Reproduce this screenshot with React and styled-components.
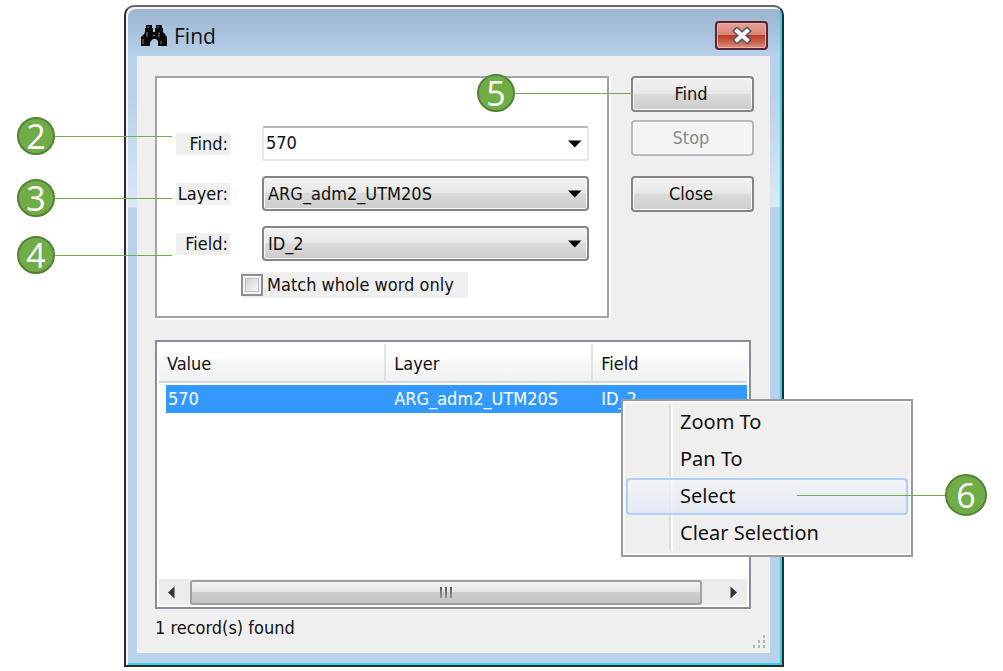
import React from "react";
import styled, { createGlobalStyle, css } from "styled-components";

const GlobalStyle = createGlobalStyle`
  *, *::before, *::after { box-sizing: border-box; }
  body {
    margin: 0;
    background: #fff;
    color: #111;
    font: 18px/22px "DejaVu Sans Condensed", "DejaVu Sans", sans-serif;
  }
  button, input, select { font: inherit; color: inherit; }
`;

const Page = styled.main`
  padding: 5px 219px 5px 124px;
`;

const Dialog = styled.section`
  position: relative;
  padding: 0 12px 12px 11px;
  border: 2px solid #2b2b2b;
  border-top-color: #6b6663;
  border-radius: 10px 10px 0 0;
  box-shadow: inset 2px 2px 0 #eef4fa, inset -2px -2px 0 #35cfe6;
  background:
    linear-gradient(to bottom, #dbe8f500 90px, #dbe8f5 200px, #dbe8f500 201px),
    linear-gradient(to bottom, #9ab4d1, #b9d1ea 50px);
`;

const TitleBar = styled.header`
  display: flex;
  align-items: center;
  gap: 6px;
  height: 49px;
  padding: 8px 2px 0 4px;

  h1 {
    flex: 1;
    margin: 0;
    font: 21px/28px "Open Sans", sans-serif;
  }
`;

const CloseBox = styled.button`
  display: grid;
  place-items: center;
  width: 53px;
  height: 29px;
  padding: 0;
  border: 2px solid #5a2530;
  border-radius: 4px;
  box-shadow: inset 0 0 0 1px #f0b3a8;
  background: linear-gradient(#e5a094, #d98476 48%, #b93a20 50%, #cf6a55 80%, #e09080);
`;

const Body = styled.div`
  padding: 20px 16px 4px 18px;
  background: #efefef;
`;

const FormArea = styled.form`
  display: grid;
  grid-template-columns: 1fr 123px;
  gap: 22px;
`;

const Group = styled.div`
  display: flex;
  flex-direction: column;
  gap: 15px;
  height: 242px;
  padding: 48px 18px 0 19px;
  border: 2px solid #a0a3ae;
  box-shadow: 2px 2px 0 #fff;
  background: #fff;
`;

const Field = styled.div`
  display: grid;
  grid-template-columns: 54px 1fr;
  align-items: center;
  gap: 32px;

  label {
    padding-right: 2px;
    background: #efefef;
    text-align: right;
  }
`;

const raised = css`
  border: 2px solid #858585;
  border-radius: 4px;
  box-shadow: inset 0 0 0 1px #fafafa;
  background: linear-gradient(#f2f2f2, #e8e8e8 48%, #dadada 50%, #cdcdcd);
`;

const Picker = styled.div`
  display: grid;
  grid-template-columns: 1fr 21px;
  align-items: center;
  height: 35px;

  select, input {
    grid-area: 1 / 1 / 2 / 3;
    width: 100%;
    height: 35px;
    margin: 0;
    padding: 0 24px 0 4px;
    appearance: none;
    outline: none;
  }
  select { ${raised} }
  input {
    padding: 0 24px 3px 2px;
    border: 2px solid #e3e9ef;
    border-top-color: #b4b7c0;
    border-radius: 2px;
    background: #fff;
  }
  svg { grid-area: 1 / 2; z-index: 1; pointer-events: none; }
`;

const CheckLabel = styled.label`
  display: flex;
  align-items: center;
  gap: 4px;
  width: 227px;
  height: 26px;
  margin: -4px 0 0 65px;
  background: #efefef;

  input {
    appearance: none;
    width: 22px;
    height: 22px;
    margin: 0;
    border: 2px solid #8e8f8f;
    box-shadow: inset 0 0 0 2px #f4f4f4, inset 0 0 0 3px #b8bdc5;
    background: linear-gradient(135deg, #c5cad2, #f6f6f6 80%);
  }
`;

const Actions = styled.div`
  display: flex;
  flex-direction: column;
  gap: 8px;
`;

const PushButton = styled.button`
  height: 36px;
  padding: 0 3px 0 0;
  ${raised}
  &:last-child { margin-top: 12px; }
  &:disabled {
    border-color: #b5bac0;
    background: #f4f4f4;
    color: #8b8b8b;
  }
`;

const Results = styled.div`
  display: flex;
  flex-direction: column;
  height: 269px;
  margin: 22px 3px 0 0;
  padding: 2px;
  border: 2px solid #888d99;
  background: #fff;
`;

const ResultTable = styled.table`
  width: 100%;
  table-layout: fixed;
  border-collapse: separate;
  border-spacing: 0;

  th, td {
    padding: 0 0 0 10px;
    font-weight: normal;
    text-align: left;
    white-space: nowrap;
  }
  th {
    height: 39px;
    padding: 3px 0 0 8px;
    border-bottom: 2px solid #d5d5d5;
    background: linear-gradient(#fff 40%, #f7f8fa 42%, #f1f2f4);
  }
  th + th { border-left: 2px solid #e2e3e6; }
  td {
    height: 30px;
    border-top: 2px solid #fff;
    background: #3399ff;
    color: #fff;
  }
  td:first-child {
    border-left: 7px solid #fff;
    padding-left: 2px;
  }
`;

const ScrollBar = styled.div`
  display: grid;
  grid-template-columns: 31px 1fr 45px;
  align-items: center;
  height: 26px;
  margin-top: auto;
  background: #ececec;

  button {
    height: 26px;
    padding: 0 0 0 8px;
    border: 0;
    background: none;
    line-height: 0;
    text-align: left;
  }
  button:last-child { padding-left: 28px; }
`;

const Thumb = styled.div`
  display: flex;
  justify-content: center;
  align-items: center;
  gap: 3px;
  height: 25px;
  border: 2px solid #a0a0a0;
  border-radius: 3px;
  background: linear-gradient(#f3f3f3, #e4e4e5 48%, #cdcdcf 50%, #c3c3c6);

  i {
    width: 2px;
    height: 11px;
    background: linear-gradient(#555, #999);
  }
`;

const StatusBar = styled.footer`
  display: flex;
  justify-content: space-between;
  margin: 8px -12px 0 0;

  svg { margin-top: 18px; }
`;

const Menu = styled.div`
  position: absolute;
  top: 392px;
  right: -131px;
  width: 292px;
  padding: 3px;
  border: 2px solid #9a9a9a;
  box-shadow: inset 0 0 0 2px #f9f9f9;
  background: linear-gradient(to right, #0000 46px, #dedede 46px 48px, #fff 48px 50px, #0000 50px) 0 4px / 100% 146px no-repeat, #efefef;
`;

const MenuItem = styled.button`
  display: block;
  width: 100%;
  height: 37px;
  padding: 0 0 2px 52px;
  border: 2px solid ${(p) => (p.$active ? "#aecff7" : "transparent")};
  border-radius: 4px;
  background: ${(p) => (p.$active ? "linear-gradient(#f2f4f8cc, #e2e9f5cc)" : "none")};
  font: 20px/28px "Noto Sans", sans-serif;
  text-align: left;
`;

const Callout = styled.div`
  position: absolute;
  top: ${(p) => p.$top}px;
  left: ${(p) => (p.$left === undefined ? "auto" : `${p.$left}px`)};
  right: ${(p) => (p.$right === undefined ? "auto" : `${p.$right}px`)};
  display: flex;
  flex-direction: ${(p) => (p.$flip ? "row-reverse" : "row")};
  align-items: center;
  pointer-events: none;

  b {
    display: grid;
    place-items: center;
    width: ${(p) => p.$size || 38}px;
    height: ${(p) => p.$size || 38}px;
    border: 2px solid #548235;
    border-radius: 50%;
    background: #70ad47;
    color: #fff;
    font: 500 34px/34px "Open Sans", sans-serif;
  }
  &::after {
    content: "";
    width: ${(p) => p.$line}px;
    height: 1px;
    background: #70ad47;
  }
`;

const Arrow = () => (
  <svg width="14" height="8" viewBox="0 0 14 8" aria-hidden="true">
    <path d="M0 0.5H13.5L6.8 7.5Z" fill="#000" />
  </svg>
);

const Binoculars = () => (
  <svg width="27" height="23" viewBox="0 0 27 23" aria-hidden="true">
    <path d="M5 1H11V4H12V8H14V4H15V1H21V4H22V8L24 10L26 13V22H17V17L15 15H12L9 18V22H0V13L3 10L4 8V4H5Z" fill="#080808" />
    <path d="M7 2V4M17 2V4M6 8V13M18 8V13M2 15V20M20 17V20" stroke="#5c5c5c" strokeWidth="1.4" fill="none" />
    <path d="M12 11.5H14" stroke="#777" />
  </svg>
);

const fields = [
  { id: "layer", label: "Layer:", value: "ARG_adm2_UTM20S" },
  { id: "field", label: "Field:", value: "ID_2" },
];

export default function App() {
  return (
    <>
      <GlobalStyle />
      <Page>
        <Dialog aria-label="Find">
          <TitleBar>
            <Binoculars />
            <h1>Find</h1>
            <CloseBox type="button" aria-label="Close window">
              <svg width="20" height="17" viewBox="0 0 20 17" aria-hidden="true">
                <path d="M5 4L15 13M15 4L5 13" stroke="#535666" strokeWidth="7" strokeLinecap="square" />
                <path d="M5 4L15 13M15 4L5 13" stroke="#f6f6f6" strokeWidth="4" strokeLinecap="square" />
              </svg>
            </CloseBox>
          </TitleBar>
          <Body>
            <FormArea onSubmit={(e) => e.preventDefault()}>
              <Group>
                <Field>
                  <label htmlFor="find">Find:</label>
                  <Picker>
                    <input id="find" type="text" defaultValue="570" />
                    <Arrow />
                  </Picker>
                </Field>
                {fields.map((f) => (
                  <Field key={f.id}>
                    <label htmlFor={f.id}>{f.label}</label>
                    <Picker>
                      <select id={f.id} defaultValue={f.value}>
                        <option>{f.value}</option>
                      </select>
                      <Arrow />
                    </Picker>
                  </Field>
                ))}
                <CheckLabel>
                  <input type="checkbox" />
                  Match whole word only
                </CheckLabel>
              </Group>
              <Actions>
                <PushButton type="submit">Find</PushButton>
                <PushButton type="button" disabled>Stop</PushButton>
                <PushButton type="button">Close</PushButton>
              </Actions>
            </FormArea>
            <Results>
              <ResultTable>
                <colgroup>
                  <col style={{ width: "38.3%" }} />
                  <col style={{ width: "35.2%" }} />
                  <col />
                </colgroup>
                <thead>
                  <tr>
                    <th scope="col">Value</th>
                    <th scope="col">Layer</th>
                    <th scope="col">Field</th>
                  </tr>
                </thead>
                <tbody>
                  <tr>
                    <td>570</td>
                    <td>ARG_adm2_UTM20S</td>
                    <td>ID_2</td>
                  </tr>
                </tbody>
              </ResultTable>
              <ScrollBar>
                <button type="button" aria-label="Scroll left">
                  <svg width="8" height="13" viewBox="0 0 8 13"><path d="M7.5 0.5V12.5L1 6.5Z" fill="#333" /></svg>
                </button>
                <Thumb><i /><i /><i /></Thumb>
                <button type="button" aria-label="Scroll right">
                  <svg width="8" height="13" viewBox="0 0 8 13"><path d="M0.5 0.5V12.5L7 6.5Z" fill="#333" /></svg>
                </button>
              </ScrollBar>
            </Results>
            <StatusBar>
              <span>1 record(s) found</span>
              <svg width="14" height="14" viewBox="0 0 14 14" fill="#b5b5b5" aria-hidden="true">
                <path d="M11 0h2v3h-2zM6 5h2v3h-2zM11 5h2v3h-2zM1 10h2v3h-2zM6 10h2v3h-2zM11 10h2v3h-2z" />
              </svg>
            </StatusBar>
          </Body>
          <Menu role="menu">
            <MenuItem type="button" role="menuitem">Zoom To</MenuItem>
            <MenuItem type="button" role="menuitem">Pan To</MenuItem>
            <MenuItem type="button" role="menuitem" $active>Select</MenuItem>
            <MenuItem type="button" role="menuitem">Clear Selection</MenuItem>
          </Menu>
          <Callout $top={110} $left={-109} $line={117}><b>2</b></Callout>
          <Callout $top={172} $left={-109} $line={117}><b>3</b></Callout>
          <Callout $top={229} $left={-109} $line={117}><b>4</b></Callout>
          <Callout $top={67} $right={151} $line={116}><b>5</b></Callout>
          <Callout $top={467} $right={-205} $line={148} $size={42} $flip><b>6</b></Callout>
        </Dialog>
      </Page>
    </>
  );
}
